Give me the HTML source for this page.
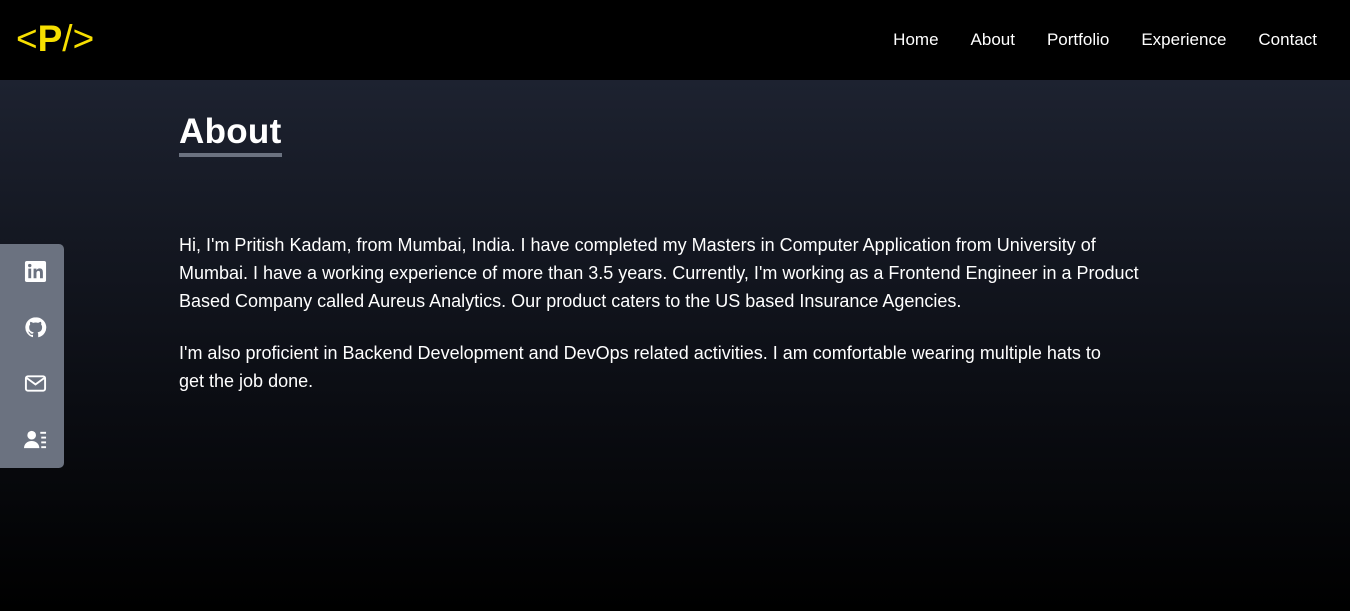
<!DOCTYPE html>
<html><head><meta charset="utf-8"><style>
*{margin:0;padding:0;box-sizing:border-box}
body{width:1350px;height:611px;overflow:hidden;font-family:"Liberation Sans",sans-serif;background:#000;color:#fff}
header{height:80px;background:#000;position:relative}
.logo{position:absolute;left:16px;top:18px;color:#f7df00;font-size:37px;font-weight:bold;letter-spacing:0px}
.logo span{font-weight:normal}
nav{position:absolute;right:33px;top:30px;font-size:17px}
nav a{color:#fff;text-decoration:none;margin-left:32px}
main{height:531px;background:linear-gradient(#1d2230 0%,#0b0d13 60%,#000 100%);position:relative}
h1{position:absolute;left:179px;top:31px;font-size:35px;font-weight:bold;padding-bottom:0px;border-bottom:4px solid #6b7280;line-height:42px;letter-spacing:0.3px}
.txt{position:absolute;left:179px;top:151px;width:985px;font-size:18px;line-height:28px}
.txt p{margin-bottom:24px}
.txt p.b{width:950px}
.side{position:absolute;left:0;top:164px;width:64px;height:224px;background:#6b7280;border-radius:0 5px 5px 0}
.side svg{position:absolute;left:24px;width:23px;height:23px}
</style></head><body>
<header><div class="logo"><span>&lt;</span>P<span>/&gt;</span></div>
<nav><a>Home</a><a>About</a><a>Portfolio</a><a>Experience</a><a>Contact</a></nav></header>
<main>
<h1>About</h1>
<div class="txt"><p>Hi, I'm Pritish Kadam, from Mumbai, India. I have completed my Masters in Computer Application from University of Mumbai. I have a working experience of more than 3.5 years. Currently, I'm working as a Frontend Engineer in a Product Based Company called Aureus Analytics. Our product caters to the US based Insurance Agencies.</p>
<p class="b">I'm also proficient in Backend Development and DevOps related activities. I am comfortable wearing multiple hats to get the job done.</p></div>
<div class="side">
<svg style="top:16px" viewBox="0 0 24 24"><rect x="1" y="1" width="22" height="22" rx="2" fill="#fff"/><rect x="4.5" y="9" width="3" height="10" fill="#6b7280"/><circle cx="6" cy="5.8" r="1.8" fill="#6b7280"/><path d="M10 9h3v1.5c.8-1.2 2-1.8 3.3-1.8 2.5 0 3.4 1.6 3.4 4.3V19h-3v-5.5c0-1.4-.4-2.2-1.6-2.2-1.3 0-2.1.9-2.1 2.4V19h-3z" fill="#6b7280"/></svg>
<svg style="top:72px" viewBox="0 0 24 24"><path fill="#fff" d="M12 1.5a10.5 10.5 0 0 0-3.3 20.5c.5.1.7-.2.7-.5v-1.9c-2.9.6-3.5-1.2-3.5-1.2-.5-1.2-1.2-1.5-1.2-1.5-.9-.6.1-.6.1-.6 1 .1 1.6 1.1 1.6 1.1.9 1.6 2.5 1.1 3.1.9.1-.7.4-1.1.7-1.4-2.3-.3-4.8-1.2-4.8-5.2 0-1.1.4-2.1 1.1-2.8-.1-.3-.5-1.3.1-2.8 0 0 .9-.3 2.9 1.1a10 10 0 0 1 5.3 0c2-1.4 2.9-1.1 2.9-1.1.6 1.5.2 2.5.1 2.8.7.7 1.1 1.7 1.1 2.8 0 4-2.5 4.9-4.8 5.2.4.3.7 1 .7 1.9v2.8c0 .3.2.6.7.5A10.5 10.5 0 0 0 12 1.5z"/></svg>
<svg style="top:128px" viewBox="0 0 24 24" fill="none" stroke="#fff" stroke-width="2"><rect x="2" y="4.5" width="20" height="15" rx="2"/><path d="M2.5 6l9.5 7 9.5-7"/></svg>
<svg style="top:184px" viewBox="0 0 24 24" fill="#fff"><circle cx="8" cy="7.5" r="4.5"/><path d="M0 21c0-4.5 3.5-7.5 8-7.5s8 3 8 7.5z"/><rect x="17" y="4" width="6" height="2"/><rect x="18" y="9" width="5" height="2"/><rect x="18" y="14" width="5" height="2"/><rect x="18" y="19" width="5" height="2"/></svg>
</div>
</main>
</body></html>
